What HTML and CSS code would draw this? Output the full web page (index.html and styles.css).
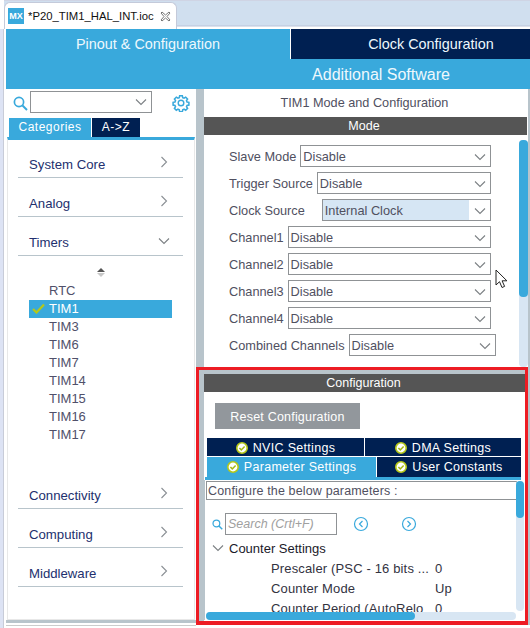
FILE: index.html
```html
<!DOCTYPE html>
<html lang="en">
<head>
    <meta charset="UTF-8">
    <title>P20_TIM1_HAL_INT.ioc</title>
    <link rel="stylesheet" href="styles.css">
</head>
<body>
    <svg class="defs" width="0" height="0">
        <symbol id="badge" viewBox="0 0 12 12">
            <circle cx="6" cy="6" r="5.2" fill="#fff" stroke="#b5c818" stroke-width="1.6"/>
            <path d="M3.4 6l1.9 1.9 3.3-3.5" fill="none" stroke="#a5b814" stroke-width="1.5"/>
        </symbol>
        <symbol id="right" viewBox="0 0 8 12">
            <path d="M1.5 1l5 5-5 5" fill="none" stroke="#8a8f94" stroke-width="1.1"/>
        </symbol>
        <symbol id="down" viewBox="0 0 12 8">
            <path d="M1 1.5l5 5 5-5" fill="none" stroke="#7c8084" stroke-width="1.1"/>
        </symbol>
        <symbol id="lens" viewBox="0 0 15 15">
            <circle cx="6" cy="6" r="4.6" fill="none" stroke="#39a9dc" stroke-width="1.7"/>
            <path d="M9.5 9.5l4.5 4.5" stroke="#39a9dc" stroke-width="2"/>
        </symbol>
    </svg>

    <div class="tabstrip">
        <div class="file-tab">
            <span class="mx-logo">MX</span>
            <span class="file-name">*P20_TIM1_HAL_INT.ioc</span>
            <svg class="close" width="11" height="11" viewBox="0 0 11 11"><path d="M1 2l1-1 3.500 3 3.500-3 1 1-3 3.500 3 3.500-1 1-3.500-3-3.500 3-1-1 3-3.500z" fill="#fff" stroke="#777" stroke-width="1"/></svg>
        </div>
    </div>

    <div class="app">
        <div class="nav">
            <div class="nav-item nav-active">Pinout &amp; Configuration</div>
            <div class="nav-item nav-dark">Clock Configuration</div>
            <div class="nav-item nav-spacer"></div>
            <div class="nav-item nav-extra">Additional Software</div>
        </div>

        <div class="main">
            <aside class="side">
                <div class="side-search">
                    <svg class="lens" width="15" height="15"><use href="#lens"/></svg>
                    <div class="combo"><svg width="12" height="8"><use href="#down"/></svg></div>
                    <svg class="gear" width="18" height="18" viewBox="0 0 18 18">
                        <circle cx="9" cy="9" r="2.8" fill="none" stroke="#39a9dc" stroke-width="1.4"/>
                        <path d="M7.500 1h3l.4 2.100 1.500.6 1.800-1.200 2.100 2.100-1.200 1.800.6 1.500 2.100.4v3l-2.100.4-.6 1.500 1.200 1.800-2.100 2.100-1.800-1.200-1.500.6-.4 2.100h-3l-.4-2.100-1.500-.6-1.800 1.200-2.100-2.100 1.200-1.800-.6-1.500-2.100-.4v-3l2.100-.4.6-1.500-1.200-1.800 2.100-2.100 1.800 1.200 1.500-.6z" transform="translate(.9 .9) scale(.9)" fill="none" stroke="#39a9dc" stroke-width="1.700"/>
                    </svg>
                </div>
                <div class="side-tabs">
                    <div class="side-tab side-tab-on">Categories</div>
                    <div class="side-tab">A-&gt;Z</div>
                </div>
                <div class="tree">
                    <div class="group">System Core<svg width="8" height="12"><use href="#right"/></svg></div>
                    <div class="group">Analog<svg width="8" height="12"><use href="#right"/></svg></div>
                    <div class="group">Timers<svg class="open" width="12" height="8"><use href="#down"/></svg></div>
                    <div class="sorter"><span class="up"></span><span class="dn"></span></div>
                    <ul class="periph">
                        <li>RTC</li>
                        <li class="sel"><svg class="tick" width="13" height="11" viewBox="0 0 13 11"><path d="M1 6l3.500 3.500L12 1.500" fill="none" stroke="#b5c818" stroke-width="2.200"/></svg>TIM1</li>
                        <li>TIM3</li>
                        <li>TIM6</li>
                        <li>TIM7</li>
                        <li>TIM14</li>
                        <li>TIM15</li>
                        <li>TIM16</li>
                        <li>TIM17</li>
                    </ul>
                    <div class="group">Connectivity<svg width="8" height="12"><use href="#right"/></svg></div>
                    <div class="group">Computing<svg width="8" height="12"><use href="#right"/></svg></div>
                    <div class="group">Middleware<svg width="8" height="12"><use href="#right"/></svg></div>
                </div>
            </aside>

            <div class="content">
                <section class="mode">
                    <h2 class="mode-title">TIM1 Mode and Configuration</h2>
                    <div class="bar">Mode</div>
                    <div class="form">
                        <div class="row"><label>Slave Mode</label><div class="select">Disable<svg width="12" height="8"><use href="#down"/></svg></div></div>
                        <div class="row"><label>Trigger Source</label><div class="select">Disable<svg width="12" height="8"><use href="#down"/></svg></div></div>
                        <div class="row"><label class="wide">Clock Source</label><div class="select"><span class="picked">Internal Clock</span><svg width="12" height="8"><use href="#down"/></svg></div></div>
                        <div class="row"><label>Channel1</label><div class="select">Disable<svg width="12" height="8"><use href="#down"/></svg></div></div>
                        <div class="row"><label>Channel2</label><div class="select">Disable<svg width="12" height="8"><use href="#down"/></svg></div></div>
                        <div class="row"><label>Channel3</label><div class="select">Disable<svg width="12" height="8"><use href="#down"/></svg></div></div>
                        <div class="row"><label>Channel4</label><div class="select">Disable<svg width="12" height="8"><use href="#down"/></svg></div></div>
                        <div class="row row-long"><label>Combined Channels</label><div class="select">Disable<svg width="12" height="8"><use href="#down"/></svg></div></div>
                    </div>
                    <div class="vscroll"><div class="thumb"></div></div>
                </section>

                <section class="config">
                    <div class="bar">Configuration</div>
                    <div class="config-body">
                        <button class="reset">Reset Configuration</button>
                        <div class="cfg-tabs">
                            <div class="cfg-tab t-nvic"><svg width="12" height="12"><use href="#badge"/></svg>NVIC Settings</div>
                            <div class="cfg-tab t-dma"><svg width="12" height="12"><use href="#badge"/></svg>DMA Settings</div>
                            <div class="cfg-tab t-param"><svg width="12" height="12"><use href="#badge"/></svg>Parameter Settings</div>
                            <div class="cfg-tab t-user"><svg width="12" height="12"><use href="#badge"/></svg>User Constants</div>
                        </div>
                        <div class="params">
                            <div class="hint">Configure the below parameters :</div>
                            <div class="finder">
                                <svg width="11" height="11"><use href="#lens"/></svg>
                                <div class="find-input">Search (Crtl+F)</div>
                                <svg class="step" width="16" height="16" viewBox="0 0 16 16"><circle cx="8" cy="8" r="6.500" fill="none" stroke="#39a9dc" stroke-width="1.200"/><path d="M9.500 5L6.500 8l3 3" fill="none" stroke="#39a9dc" stroke-width="1.200"/></svg>
                                <svg class="step" width="16" height="16" viewBox="0 0 16 16"><circle cx="8" cy="8" r="6.500" fill="none" stroke="#39a9dc" stroke-width="1.200"/><path d="M6.500 5l3 3-3 3" fill="none" stroke="#39a9dc" stroke-width="1.200"/></svg>
                            </div>
                            <div class="param-head"><svg width="12" height="8"><use href="#down"/></svg>Counter Settings</div>
                            <div class="param"><span>Prescaler (PSC - 16 bits ...</span><span>0</span></div>
                            <div class="param"><span>Counter Mode</span><span>Up</span></div>
                            <div class="param"><span>Counter Period (AutoRelo</span><span>0</span></div>
                            <div class="hscroll"><div class="thumb"></div></div>
                            <div class="vscroll"><div class="thumb"></div></div>
                        </div>
                    </div>
                </section>
            </div>
        </div>
    </div>

    <svg class="cursor" width="13" height="20" viewBox="0 0 13 20"><path d="M1 1v15l3.500-3.300 2.500 5.800 2.600-1.100-2.500-5.600h4.800z" fill="#fff" stroke="#222" stroke-width="1"/></svg>
</body>
</html>
```

FILE: styles.css
```css
* {
    box-sizing: border-box;
}
html, body {
    height: 100%;
}
body {
    margin: 0;
    overflow: hidden;
    background: linear-gradient(90deg, #dde3f4 3px, #c8ccd8 3px, #c8ccd8 4px, #fff 4px);
    font-family: "Liberation Sans", Arial, sans-serif;
    font-size: 13px;
    position: relative;
}
.defs {
    position: absolute;
}

/* file tab */
.tabstrip {
    height: 29px;
    padding: 2px 0 0 4px;
    background:
        linear-gradient(90deg, #fff 4px, transparent 4px),
        linear-gradient(#cfd4e4 0, #cfd4e4 1px, #d0dfef 1px, #d0dfef 25px, #b9c3d8 26px, #fff 27px);
}
.file-tab {
    width: 173px;
    height: 27px;
    padding: 5px 5px 0 3px;
    display: flex;
    align-items: flex-start;
    background-color: #fff;
    border: 1px solid #c4cada;
    border-bottom: 0;
    border-radius: 6px 6px 0 0;
}
.mx-logo {
    width: 16px;
    height: 16px;
    flex: none;
    background-color: #39a9dc;
    color: #fff;
    font-size: 9px;
    font-weight: bold;
    line-height: 16px;
    text-align: center;
}
.file-name {
    margin: 1px 0 0 4px;
    font-size: 11.300px;
    line-height: 15px;
    color: #111;
    white-space: nowrap;
}
.close {
    flex: none;
    margin: 3px 0 0 auto;
}

/* perspective nav */
.app {
    margin-left: 6px;
    height: 599px;
    display: flex;
    flex-direction: column;
}
.nav {
    display: grid;
    grid-template-columns: 284px 1fr;
    grid-template-rows: 30px 30px;
    background-color: #39a9dc;
    flex: none;
}
.nav-item {
    font-size: 14.400px;
    color: #eef8fd;
    text-align: center;
    line-height: 31px;
}
.nav-active {
    background-color: #39a9dc;
}
.nav-dark {
    background-color: #002052;
    border-left: 1px solid #fff;
    padding-left: 41px;
}
.nav-extra {
    font-size: 16px;
    line-height: 32px;
    padding-right: 58px;
}

.main {
    flex: 1;
    display: flex;
    align-items: flex-start;
    min-height: 0;
}

/* left column */
.side {
    width: 190px;
    height: 534px;
    flex: none;
    background-color: #fff;
    display: flex;
    flex-direction: column;
    border-bottom: 3px solid #b8c4cb;
    box-shadow: 0 2px 0 #fff, 0 3px 0 #ccc;
}
.side-search {
    height: 29px;
    padding: 2px 6px 0 7px;
    display: flex;
    align-items: flex-start;
}
.lens {
    margin-top: 5px;
    flex: none;
}
.combo {
    width: 122px;
    height: 22px;
    margin-left: 2px;
    padding-right: 4px;
    border: 1px solid #8f9295;
    display: flex;
    align-items: center;
    justify-content: flex-end;
}
.gear {
    margin: 3px 0 0 auto;
}
.side-tabs {
    height: 19px;
    margin-left: 3px;
    display: flex;
    gap: 1px;
}
.side-tab {
    width: 48px;
    background-color: #002052;
    color: #fff;
    font-size: 12px;
    letter-spacing: 0.5px;
    line-height: 19px;
    text-align: center;
}
.side-tab-on {
    width: 82px;
    background-color: #39a9dc;
}
.tree {
    flex: 1;
    margin: 0 1px;
    padding: 0 11px 0 10px;
    border-top: 3px solid #39a9dc;
    border-left: 1px solid #e8e8e8;
    border-right: 1px solid #e8e8e8;
    border-bottom: 1px solid #e8e8e8;
}
.group {
    height: 39px;
    padding: 17px 15px 0 11px;
    display: flex;
    align-items: flex-start;
    justify-content: space-between;
    border-bottom: 1px solid #b8c4cb;
    color: #22306e;
    font-size: 13.200px;
    line-height: 18px;
}
.group:first-child {
    height: 38px;
    padding-top: 16px;
}
.group .open {
    margin: 3px -2px 0 0;
}
.sorter {
    height: 26px;
    padding-top: 12px;
    margin-left: 1px;
    display: flex;
    flex-direction: column;
    align-items: center;
    gap: 1px;
}
.sorter .up {
    border: 4px solid transparent;
    border-top: 0;
    border-bottom: 4px solid #555;
}
.sorter .dn {
    border: 4px solid transparent;
    border-bottom: 0;
    border-top: 4px solid #c8c8c8;
}
.periph {
    list-style: none;
    margin: 0 0 26px 11px;
    padding: 0;
    width: 143px;
}
.periph li {
    height: 18px;
    padding-left: 20px;
    line-height: 18px;
    color: #50506a;
    position: relative;
}
.periph .sel {
    background-color: #39a9dc;
    color: #fff;
}
.tick {
    position: absolute;
    left: 3px;
    top: 3px;
}

/* right column */
.content {
    width: 334px;
    height: 536px;
    flex: none;
    padding-right: 2px;
    display: flex;
    flex-direction: column;
    background-color: #b8c4cb;
}
.mode {
    height: 278px;
    flex: none;
    border-left: 8px solid #b8c4cb;
    background-color: #fff;
    position: relative;
}
.mode-title {
    margin: 0;
    height: 28px;
    padding-right: 3px;
    font-size: 12.700px;
    font-weight: normal;
    line-height: 29px;
    text-align: center;
    color: #50505f;
}
.bar {
    height: 18px;
    padding-right: 2px;
    background-color: #555;
    color: #fff;
    font-size: 12.500px;
    line-height: 19px;
    text-align: center;
}
.mode .bar {
    width: 323px;
    padding-right: 3px;
}
.form {
    width: 287px;
    padding: 10px 0 0 25px;
    display: flex;
    flex-direction: column;
    gap: 5px;
}
.row {
    display: flex;
    height: 22px;
    align-items: center;
    gap: 4px;
    color: #50505f;
    font-size: 12.750px;
}
.row-long {
    margin-right: -5px;
}
.row label {
    padding-top: 1px;
    white-space: nowrap;
}
.row .wide {
    margin-right: 13px;
}
.select {
    flex: 1;
    height: 22px;
    padding: 1px 0 0 2px;
    display: flex;
    align-items: center;
    justify-content: space-between;
    border: 1px solid #8f9295;
    line-height: 18px;
}
.select svg {
    margin-right: 4px;
}
.picked {
    flex: 1;
    margin: -1px 5px 0 -2px;
    padding: 1px 0 0 2px;
    background-color: #d6e6f4;
    line-height: 19px;
}
.vscroll {
    position: absolute;
    right: 0;
    top: 51px;
    width: 9px;
    height: 227px;
    border-radius: 4px;
    background-color: #d8e6f3;
}
.vscroll .thumb {
    height: 157px;
    border-radius: 4px;
    background-color: #39a9dc;
}

/* red framed configuration */
.config {
    height: 258px;
    flex: none;
    border: 3px solid #ed1c24;
    border-bottom-width: 4px;
    padding: 4px 0 0 5px;
    background-color: #b8c4cb;
    display: flex;
    flex-direction: column;
}
.config-body {
    flex: 1;
    background-color: #fff;
    min-height: 0;
}
.reset {
    display: block;
    width: 145px;
    height: 26px;
    margin: 11px 0 9px 11px;
    padding: 1px 0 0;
    border: 0;
    background-color: #92979c;
    color: #fff;
    font-family: inherit;
    font-size: 12.500px;
    letter-spacing: 0.2px;
}
.cfg-tabs {
    width: 316px;
    margin-left: 1px;
    padding-left: 2px;
    border-bottom: 3px solid #39a9dc;
    display: grid;
    grid-template-columns: 157px 1px 11px 1px 144px;
    grid-template-rows: 18px 20px;
    row-gap: 1px;
}
.cfg-tab {
    display: flex;
    align-items: center;
    justify-content: center;
    gap: 5px;
    background-color: #002052;
    color: #fff;
    font-size: 12.500px;
    letter-spacing: 0.3px;
}
.t-nvic { grid-column: 1; padding-top: 1px; }
.t-dma { grid-column: 3 / 6; padding-top: 1px; }
.t-param { grid-column: 1 / 4; background-color: #39a9dc; }
.t-user { grid-column: 5; }
.params {
    position: relative;
    width: 320px;
    height: 140px;
    margin-left: 1px;
    padding: 1px 0 0 1px;
    box-shadow: -1px 0 0 #b8c4cb;
    overflow: hidden;
}
.params > .vscroll {
    top: 1px;
    right: 1px;
    width: 8px;
    height: 130px;
}
.params > .vscroll .thumb {
    height: 37px;
}
.hint {
    width: 311px;
    height: 19px;
    padding-left: 1px;
    border: 1px solid #8f9295;
    border-right-color: #b8c4cb;
    color: #50505f;
    font-size: 12.500px;
    letter-spacing: 0.15px;
    line-height: 19px;
}
.finder {
    height: 22px;
    margin-top: 13px;
    padding-left: 6px;
    display: flex;
    align-items: center;
}
.find-input {
    width: 112px;
    height: 22px;
    margin: 0 16px 0 2px;
    padding-left: 2px;
    border: 1px solid #8f9295;
    color: #a0a0a0;
    font-size: 12.500px;
    font-style: italic;
    line-height: 20px;
}
.step {
    margin-right: 32px;
}
.param-head {
    height: 20px;
    margin-top: 3px;
    padding-left: 6px;
    display: flex;
    align-items: center;
    gap: 5px;
    color: #1a1a2a;
}
.param {
    height: 20px;
    padding-left: 65px;
    display: flex;
    align-items: center;
    color: #33333f;
}
.param span:first-child {
    width: 164px;
    letter-spacing: 0.15px;
    white-space: nowrap;
    overflow: hidden;
}
.hscroll {
    position: absolute;
    left: 1px;
    bottom: 0;
    width: 310px;
    height: 8px;
    border-radius: 4px;
    background-color: #d8e6f3;
}
.hscroll .thumb {
    width: 209px;
    height: 8px;
    border-radius: 4px;
    background-color: #39a9dc;
}

.cursor {
    position: absolute;
    left: 495px;
    top: 269px;
}
```
